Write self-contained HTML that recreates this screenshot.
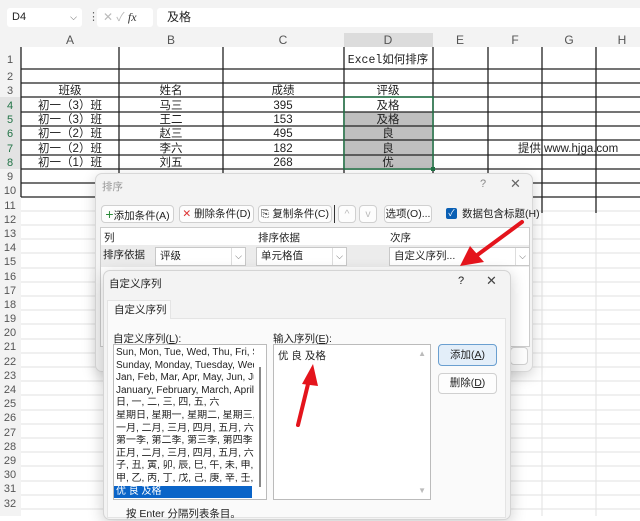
<!DOCTYPE html>
<html><head><meta charset="utf-8"><style>
*{margin:0;padding:0;box-sizing:border-box}
body{width:640px;height:516px;overflow:hidden;background:#fff;font-family:"Liberation Sans","Noto Sans CJK SC",sans-serif;font-size:11px;color:#222;position:relative}
.a{position:absolute;white-space:nowrap}
.btn{position:absolute;background:#fdfdfd;border:1px solid #d0d0d0;border-radius:4px;font-size:10.5px;line-height:17px;text-align:center;color:#222;white-space:nowrap}
.dd{position:absolute;background:#fff;border:1px solid #c8c8c8;font-size:10.5px;line-height:17px;padding-left:4px}
.dd i{position:absolute;right:0;top:0;width:14px;height:17px;border-left:1px solid #ddd;font-style:normal;color:#666;text-align:center;font-size:9px}
.li div{padding-left:2px;width:140px;overflow:hidden}
</style></head><body>
<div class="a" style="left:0;top:0;width:640px;height:33px;background:#f3f3f3"></div>
<div class="a" style="left:7px;top:8px;width:75px;height:19px;background:#fff;border-radius:3px;font-size:11px;line-height:19px;padding-left:5px">D4<span style="position:absolute;right:5px;color:#555;font-size:9px">⌵</span></div>
<div class="a" style="left:88px;top:10px;color:#666">⋮</div>
<div class="a" style="left:97px;top:8px;width:56px;height:19px;background:#fff;border-radius:3px;line-height:19px;color:#bbb;padding-left:6px;font-size:12px">✕ ✓ <span style="color:#333;font-family:'Liberation Serif';font-style:italic">fx</span></div>
<div class="a" style="left:157px;top:8px;width:483px;height:19px;background:#fff;border-radius:3px 0 0 3px;line-height:19px;padding-left:10px;font-size:12px">及格</div>
<svg class="a" style="left:0;top:33px" width="640" height="483">
<rect x="0" y="0" width="640" height="14" fill="#f3f3f3"/>
<rect x="0" y="0" width="21" height="483" fill="#f3f3f3"/>
<rect x="344" y="0" width="89" height="14" fill="#dcdcdc"/>
<rect x="0" y="64" width="21" height="72" fill="#e3e3e3"/>
<g fill="#bfbfbf"><rect x="345" y="79" width="87" height="56"/></g>
<g stroke="#e2e2e2">
<line x1="21" y1="178" x2="640" y2="178"/><line x1="21" y1="192" x2="640" y2="192"/><line x1="21" y1="206" x2="640" y2="206"/><line x1="21" y1="220" x2="640" y2="220"/><line x1="21" y1="235" x2="640" y2="235"/><line x1="21" y1="249" x2="640" y2="249"/><line x1="21" y1="263" x2="640" y2="263"/><line x1="21" y1="277" x2="640" y2="277"/><line x1="21" y1="291" x2="640" y2="291"/><line x1="21" y1="306" x2="640" y2="306"/><line x1="21" y1="320" x2="640" y2="320"/><line x1="21" y1="334" x2="640" y2="334"/><line x1="21" y1="348" x2="640" y2="348"/><line x1="21" y1="362" x2="640" y2="362"/><line x1="21" y1="377" x2="640" y2="377"/><line x1="21" y1="391" x2="640" y2="391"/><line x1="21" y1="405" x2="640" y2="405"/><line x1="21" y1="419" x2="640" y2="419"/><line x1="21" y1="433" x2="640" y2="433"/><line x1="21" y1="448" x2="640" y2="448"/><line x1="21" y1="462" x2="640" y2="462"/><line x1="21" y1="476" x2="640" y2="476"/>
<line x1="542" y1="180" x2="542" y2="483"/><line x1="596" y1="180" x2="596" y2="483"/>
</g>
<g stroke="#222" stroke-width="1.3">
<line x1="21" y1="36" x2="640" y2="36"/><line x1="21" y1="50" x2="640" y2="50"/><line x1="21" y1="64" x2="640" y2="64"/>
<line x1="21" y1="79" x2="640" y2="79"/><line x1="21" y1="93" x2="640" y2="93"/><line x1="21" y1="107" x2="640" y2="107"/>
<line x1="21" y1="122" x2="640" y2="122"/><line x1="21" y1="136" x2="640" y2="136"/><line x1="21" y1="150" x2="640" y2="150"/>
<line x1="21" y1="164" x2="640" y2="164"/>
<line x1="119" y1="14" x2="119" y2="150"/><line x1="223" y1="14" x2="223" y2="150"/><line x1="344" y1="14" x2="344" y2="150"/>
<line x1="433" y1="14" x2="433" y2="150"/><line x1="488" y1="14" x2="488" y2="150"/><line x1="542" y1="14" x2="542" y2="180"/><line x1="596" y1="14" x2="596" y2="180"/>
<line x1="21" y1="14" x2="21" y2="164"/>
</g>
<rect x="344" y="64" width="89" height="72" fill="none" stroke="#217346" stroke-width="1.5"/>
<rect x="431" y="134" width="4" height="4" fill="#217346"/>
<g font-size="12" fill="#555" text-anchor="middle" font-family="Liberation Sans">
<text x="70" y="11">A</text><text x="171" y="11">B</text><text x="283" y="11">C</text><text x="388" y="11">D</text><text x="460" y="11">E</text><text x="515" y="11">F</text><text x="569" y="11">G</text><text x="622" y="11">H</text>
</g>
<g font-size="11" fill="#555" text-anchor="middle">
<text x="10" y="30">1</text><text x="10" y="47">2</text><text x="10" y="61">3</text><text x="10" y="76" fill="#217346">4</text><text x="10" y="90" fill="#217346">5</text><text x="10" y="104" fill="#217346">6</text><text x="10" y="119" fill="#217346">7</text><text x="10" y="133" fill="#217346">8</text>
<text x="10" y="147">9</text><text x="10" y="161">10</text><text x="10" y="176">11</text><text x="10" y="190">12</text><text x="10" y="204">13</text><text x="10" y="218">14</text><text x="10" y="232">15</text><text x="10" y="247">16</text><text x="10" y="261">17</text><text x="10" y="275">18</text><text x="10" y="289">19</text><text x="10" y="303">20</text><text x="10" y="317">21</text><text x="10" y="332">22</text><text x="10" y="346">23</text><text x="10" y="360">24</text><text x="10" y="374">25</text><text x="10" y="388">26</text><text x="10" y="403">27</text><text x="10" y="417">28</text><text x="10" y="431">29</text><text x="10" y="445">30</text><text x="10" y="459">31</text><text x="10" y="474">32</text>
</g>
<g font-size="11.5" fill="#222" text-anchor="middle">
<text x="388" y="30" font-family="Liberation Mono,Noto Sans CJK SC">Excel如何排序</text>
<text x="70" y="61">班级</text><text x="171" y="61">姓名</text><text x="283" y="61">成绩</text><text x="388" y="61">评级</text>
<text x="70" y="76">初一（3）班</text><text x="171" y="76">马三</text><text x="283" y="76">395</text><text x="388" y="76">及格</text>
<text x="70" y="90">初一（3）班</text><text x="171" y="90">王二</text><text x="283" y="90">153</text><text x="388" y="90">及格</text>
<text x="70" y="104">初一（2）班</text><text x="171" y="104">赵三</text><text x="283" y="104">495</text><text x="388" y="104">良</text>
<text x="70" y="119">初一（2）班</text><text x="171" y="119">李六</text><text x="283" y="119">182</text><text x="388" y="119">良</text>
<text x="70" y="133">初一（1）班</text><text x="171" y="133">刘五</text><text x="283" y="133">268</text><text x="388" y="133">优</text>
<text x="568" y="119">提供 www.hjga.com</text>
</g>
</svg>
<div class="a" style="left:95px;top:173px;width:438px;height:199px;background:#f3f3f3;border:1px solid #d8d8d8;border-radius:7px;box-shadow:0 4px 14px rgba(0,0,0,.18)"></div>
<div class="a" style="left:102px;top:179px;color:#999;font-size:10.5px">排序</div>
<div class="a" style="left:480px;top:178px;color:#888;font-size:11px">?</div>
<div class="a" style="left:510px;top:176px;color:#666;font-size:13px">✕</div>
<div class="btn" style="left:101px;top:205px;width:73px;height:18px"><span style="color:#2a8a3a;font-size:14px">+</span>添加条件(A)</div>
<div class="btn" style="left:179px;top:205px;width:75px;height:18px"><span style="color:#d33">✕</span> 删除条件(D)</div>
<div class="btn" style="left:258px;top:205px;width:74px;height:18px">⎘ 复制条件(C)</div>
<div class="a" style="left:334px;top:205px;width:1px;height:18px;background:#333"></div>
<div class="btn" style="left:338px;top:205px;width:18px;height:18px;color:#bbb">^</div>
<div class="btn" style="left:359px;top:205px;width:18px;height:18px;color:#bbb">v</div>
<div class="btn" style="left:384px;top:205px;width:48px;height:18px">选项(O)...</div>
<div class="a" style="left:446px;top:208px;width:11px;height:11px;background:#0a5fb4;border-radius:2px;color:#fff;font-size:9px;line-height:11px;text-align:center">✓</div>
<div class="a" style="left:462px;top:206px;font-size:10.5px">数据包含标题(H)</div>
<div class="a" style="left:100px;top:227px;width:430px;height:120px;background:#fff;border:1px solid #ccc"></div>
<div class="a" style="left:101px;top:245px;width:428px;height:22px;background:#ececec"></div>
<div class="a" style="left:104px;top:230px;font-size:10.5px">列</div>
<div class="a" style="left:258px;top:230px;font-size:10.5px">排序依据</div>
<div class="a" style="left:390px;top:230px;font-size:10.5px">次序</div>
<div class="a" style="left:103px;top:247px;font-size:10.5px">排序依据</div>
<div class="dd" style="left:155px;top:247px;width:91px;height:19px">评级<i>⌵</i></div>
<div class="dd" style="left:256px;top:247px;width:91px;height:19px">单元格值<i>⌵</i></div>
<div class="dd" style="left:389px;top:247px;width:141px;height:19px">自定义序列...<i>⌵</i></div>
<div class="btn" style="left:510px;top:347px;width:18px;height:18px"></div>
<div class="a" style="left:103px;top:270px;width:408px;height:250px;background:#f3f3f3;border:1px solid #d4d4d4;border-radius:7px;box-shadow:0 4px 16px rgba(0,0,0,.2)"></div>
<div class="a" style="left:109px;top:276px;font-size:10.5px">自定义序列</div>
<div class="a" style="left:458px;top:275px;font-size:11px">?</div>
<div class="a" style="left:486px;top:273px;font-size:13px;color:#444">✕</div>
<div class="a" style="left:107px;top:318px;width:399px;height:200px;background:#fafafa;border:1px solid #e4e4e4"></div>
<div class="a" style="left:107px;top:300px;width:64px;height:19px;background:#fafafa;border:1px solid #e4e4e4;border-bottom:none;font-size:10.5px;line-height:18px;padding-left:6px">自定义序列</div>
<div class="a" style="left:113px;top:331px;font-size:10.5px">自定义序列(<u>L</u>):</div>
<div class="a" style="left:273px;top:331px;font-size:10.5px">输入序列(<u>E</u>):</div>
<div class="a li" style="left:113px;top:344px;width:154px;height:156px;background:#fff;border:1px solid #bbb;overflow:hidden;font-size:10px;line-height:12.6px;padding-top:2px">
<div>Sun, Mon, Tue, Wed, Thu, Fri, Sat</div>
<div>Sunday, Monday, Tuesday, Wednesday</div>
<div>Jan, Feb, Mar, Apr, May, Jun, Jul</div>
<div>January, February, March, April</div>
<div>日, 一, 二, 三, 四, 五, 六</div>
<div>星期日, 星期一, 星期二, 星期三, 星期四</div>
<div>一月, 二月, 三月, 四月, 五月, 六月,</div>
<div>第一季, 第二季, 第三季, 第四季</div>
<div>正月, 二月, 三月, 四月, 五月, 六月,</div>
<div>子, 丑, 寅, 卯, 辰, 巳, 午, 未, 申, 酉</div>
<div>甲, 乙, 丙, 丁, 戊, 己, 庚, 辛, 壬, 癸</div>
<div style="width:138px;background:#0a64c8;color:#fff">优 良 及格</div>
<div class="a" style="left:145px;top:22px;width:2px;height:120px;background:#888;padding:0"></div>
</div>
<div class="a" style="left:273px;top:344px;width:158px;height:156px;background:#fff;border:1px solid #bbb;font-size:10.5px;padding:3px 4px">优 良 及格<span class="a" style="right:4px;top:4px;color:#bbb;font-size:8px">▲</span><span class="a" style="right:4px;bottom:4px;color:#bbb;font-size:8px">▼</span></div>
<div class="btn" style="left:438px;top:344px;width:59px;height:22px;line-height:20px;background:#e3eef9;border-color:#6a9fd0">添加(<u>A</u>)</div>
<div class="btn" style="left:438px;top:373px;width:59px;height:21px;line-height:19px">删除(<u>D</u>)</div>
<div class="a" style="left:126px;top:506px;font-size:10.5px">按 Enter 分隔列表条目。</div>
<svg class="a" style="left:0;top:0" width="640" height="516">
<g stroke="#e4141c" stroke-width="4" stroke-linecap="round"><line x1="522" y1="222" x2="476" y2="256"/><line x1="298" y1="425" x2="309" y2="380"/></g>
<polygon points="460,266 470,246 484,262" fill="#e4141c"/>
<polygon points="313,364 302,384 318,386" fill="#e4141c"/>
</svg>
</body></html>
